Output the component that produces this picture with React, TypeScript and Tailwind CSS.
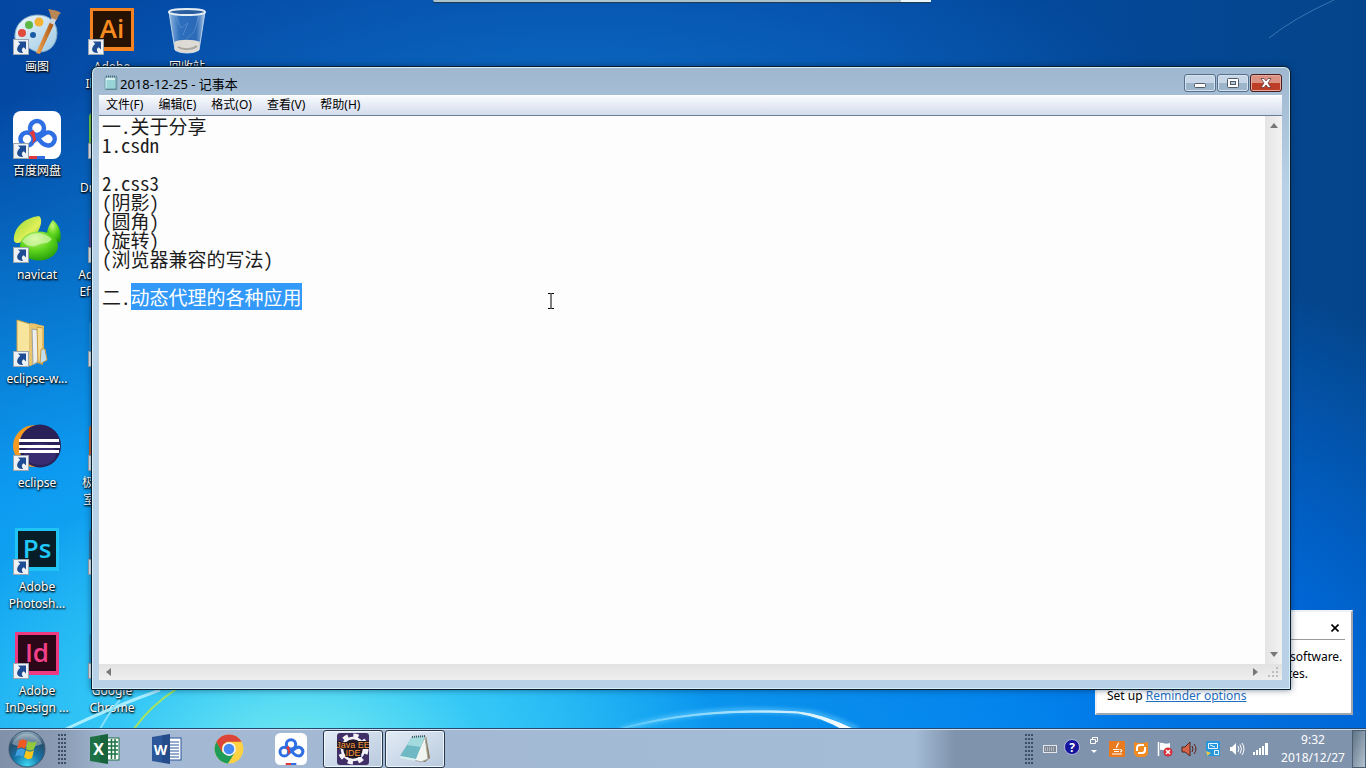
import { useEffect, useRef, type ReactNode } from "react";

const UI = "font-['Noto_Sans','Noto_Sans_CJK_SC',sans-serif]";

const NOTE = `一.关于分享
1.csdn

2.css3
(阴影)
(圆角)
(旋转)
(浏览器兼容的写法)

二.动态代理的各种应用`;

function Shortcut() {
  return (
    <svg className="absolute bottom-0 left-0 h-4 w-4" viewBox="0 0 16 16" aria-hidden="true">
      <rect x="0.5" y="0.5" width="15" height="15" fill="#eef2f6" stroke="#9aa5ad" />
      <path d="M5 2.500h8v8l-2.200-2.200C8.500 9.600 8.300 11 10 14C4 14.500 1.800 9.500 7.200 4.700Z" fill="#1d4c92" />
    </svg>
  );
}

function Paint() {
  return (
    <svg viewBox="0 0 48 48" className="h-full w-full" aria-hidden="true">
      <defs>
        <linearGradient id="palette" x1="0" y1="0" x2="1" y2="1">
          <stop offset="0" stopColor="#f2f9fd" />
          <stop offset="1" stopColor="#9cc9e4" />
        </linearGradient>
        <linearGradient id="handle" x1="0" x2="1">
          <stop offset="0" stopColor="#f3a653" />
          <stop offset="1" stopColor="#a8530f" />
        </linearGradient>
      </defs>
      <path d="M25 8C11 8 1 18 2 31c1 8 7 8 11 9 5 1 7 5 14 5 10 0 17-8 17-19C44 15 36 8 25 8Z" fill="url(#palette)" stroke="#83aac6" />
      <circle cx="20" cy="28" r="3" fill="#1a5da6" />
      <circle cx="9" cy="26" r="4" fill="#df4b3c" />
      <circle cx="16" cy="18" r="4" fill="#5db847" />
      <circle cx="26" cy="15" r="4.500" fill="#f3b233" />
      <path d="m37 15 4 2-14 30-4-1Z" fill="url(#handle)" />
      <path d="m37 16 2-7 5 2-3 7Z" fill="#cdd3d6" />
      <path d="M38 11c-1-5-2-8-3-9 5 1 9 1 13 4-2 1-3 3-4 7Z" fill="#b98756" />
    </svg>
  );
}

function AdobeTile({ letters, edge, fill, ink }: { letters: string; edge: string; fill: string; ink: string }) {
  return (
    <svg viewBox="0 0 48 48" className="h-full w-full" aria-hidden="true">
      <rect x="2" y="1" width="44" height="43" fill={edge} />
      <rect x="5" y="4" width="38" height="36" fill={fill} />
      <text x="24" y="31" textAnchor="middle" fontFamily="Open Sans" fontWeight="600" fontSize="26" fill={ink}>
        {letters}
      </text>
    </svg>
  );
}

function Bin() {
  return (
    <svg viewBox="0 0 48 48" className="h-full w-full" aria-hidden="true">
      <defs>
        <linearGradient id="bin" x1="0" x2="1">
          <stop offset="0" stopColor="#a9c9e8" stopOpacity=".9" />
          <stop offset=".3" stopColor="#3f7cc4" stopOpacity=".7" />
          <stop offset=".75" stopColor="#3a74bd" stopOpacity=".7" />
          <stop offset="1" stopColor="#c7dcf0" stopOpacity=".9" />
        </linearGradient>
      </defs>
      <path d="M6 5h36l-6 38c-5 4-19 4-24 0Z" fill="url(#bin)" stroke="#b9d2e8" />
      <path d="M11 35c5-3 20-3 26 0l-1 8c-5 4-19 4-24 0Z" fill="#dedbd5" />
      <path d="M15 40c5 3 14 3 19-1" stroke="#aaa6a0" strokeWidth="2" fill="none" />
      <path d="M12 8l6 13 7-5-5 12M36 9l-5 16-7 6" stroke="#8fb8e2" fill="none" opacity=".35" />
      <ellipse cx="24" cy="5" rx="18" ry="3" fill="#2b5e9e" stroke="#e4edf4" strokeWidth="2" />
    </svg>
  );
}

function BaiduCloud() {
  return (
    <svg viewBox="0 0 48 48" className="h-full w-full" aria-hidden="true">
      <rect width="48" height="48" rx="8" fill="#fff" />
      <g fill="none" stroke="#2f6fe4" strokeWidth="4.500">
        <circle cx="24" cy="17" r="7" />
        <circle cx="14" cy="28" r="6.500" />
        <path d="m19 31 12-8a6.500 6.500 0 1 1 2 11c-4-1-6-4-8-7" />
      </g>
      <path d="m16 22 5-3 2 10-4 4c2-4 1-8-3-11Z" fill="#e2393b" />
      <path d="M16 45h8v3h-8Z" fill="#e2393b" />
      <path d="M24 45h8v3h-8Z" fill="#2f6fe4" />
    </svg>
  );
}

function Navicat() {
  return (
    <svg viewBox="0 0 48 48" className="h-full w-full" aria-hidden="true">
      <defs>
        <radialGradient id="leaf" cx=".4" cy=".25" r=".8">
          <stop offset="0" stopColor="#c9f77b" />
          <stop offset=".5" stopColor="#5fd51d" />
          <stop offset="1" stopColor="#229a0a" />
        </radialGradient>
        <linearGradient id="ear" x1="0" y1="0" x2="1" y2="1">
          <stop offset="0" stopColor="#8edb2f" />
          <stop offset=".6" stopColor="#e2ef5b" />
          <stop offset="1" stopColor="#6fc822" />
        </linearGradient>
      </defs>
      <path d="M1 26C0 13 11 3 26 1c4 3 2 11-2 17-6 0-12 3-16 9-3 2-6 1-7-1Z" fill="url(#ear)" />
      <path d="M40 5c7 6 9 14 7 22-3 2-8-5-13-8 0-5 3-11 6-14Z" fill="url(#leaf)" />
      <ellipse cx="26" cy="31" rx="19" ry="14.500" fill="url(#leaf)" />
      <path d="M9 26c7-10 22-10 30-2-4 6-9 3-14 6-6 3-12 1-16-4Z" fill="#e6fbc4" opacity=".6" />
    </svg>
  );
}

function Folder() {
  return (
    <svg viewBox="0 0 48 48" className="h-full w-full" aria-hidden="true">
      <path d="M20 4 30 7v39l-10-4Z" fill="#d2a34a" />
      <path d="M4 1 17 5v42L4 40Z" fill="#f7e59d" stroke="#caa24c" />
      <path d="m17 4 14 3v34l-9 4-5 2Z" fill="#e9c46c" />
      <path d="m19 10 6 1v31l-5 4Z" fill="#eceeed" stroke="#9ca3a0" />
      <path d="m24 8 6 1v33l-5 2Z" fill="#f4dc93" stroke="#c99a3f" />
      <path d="M28 30h4l2 11-7 4Z" fill="#c2ddec" stroke="#c99a3f" />
    </svg>
  );
}

function Eclipse() {
  return (
    <svg viewBox="0 0 48 48" className="h-full w-full" aria-hidden="true">
      <ellipse cx="22" cy="23" rx="22" ry="21" fill="#f59a22" />
      <ellipse cx="27" cy="23" rx="21" ry="21.500" fill="#2a2158" />
      <ellipse cx="27" cy="31" rx="16" ry="11" fill="#473788" opacity=".5" />
      <path d="M6 16h40v3H6ZM6 22h41v3H6ZM6 27h40v3H6Z" fill="#fff" />
    </svg>
  );
}

function Sliver({ fill }: { fill: string }) {
  return (
    <svg viewBox="0 0 48 48" className="h-full w-full" aria-hidden="true">
      <rect x="1" y="2" width="44" height="42" rx="4" fill={fill} />
    </svg>
  );
}

function Chrome() {
  return (
    <svg viewBox="0 0 48 48" className="h-full w-full" aria-hidden="true">
      <circle cx="24" cy="24" r="23" fill="#ffd243" />
      <path d="M4 12.500A23 23 0 0 0 22.500 47L33.500 29 24 24l-9.500 6Z" fill="#1f9d58" />
      <path d="M4 12.500A23 23 0 0 1 44 12.500H24c-6 0-10 4-11 9v8Z" fill="#dc4437" />
      <circle cx="24" cy="24" r="11" fill="#f4f6f8" />
      <circle cx="24" cy="24" r="8.500" fill="#4688f1" />
    </svg>
  );
}

type Item = { name: string; icon: ReactNode; plain?: boolean };

const columns: Item[][] = [
  [
    { name: "画图", icon: <Paint /> },
    { name: "百度网盘", icon: <BaiduCloud /> },
    { name: "navicat", icon: <Navicat /> },
    { name: "eclipse-w...", icon: <Folder /> },
    { name: "eclipse", icon: <Eclipse /> },
    { name: "Adobe\nPhotosh...", icon: <AdobeTile letters="Ps" edge="#20c4f4" fill="#071e28" ink="#20c8fa" /> },
    { name: "Adobe\nInDesign ...", icon: <AdobeTile letters="Id" edge="#ee3a80" fill="#2c0718" ink="#f2418a" /> },
  ],
  [
    { name: "Adobe\nIllustrat...", icon: <AdobeTile letters="Ai" edge="#f58220" fill="#261203" ink="#f98a1f" /> },
    { name: "Adobe\nDreamwe...", icon: <Sliver fill="#7ad23a" /> },
    { name: "Adobe After\nEffects CC...", icon: <Sliver fill="#5a4a9c" /> },
    { name: "", icon: <Sliver fill="#2194dc" /> },
    { name: "极域电子教\n室学生端...", icon: <Sliver fill="#d8682e" /> },
    { name: "", icon: <Sliver fill="#3877a2" /> },
    { name: "Google\nChrome", icon: <Sliver fill="#2a9cd0" /> },
  ],
  [{ name: "回收站", icon: <Bin />, plain: true }],
];

function DesktopIcon({ item }: { item: Item }) {
  return (
    <a href="#" className="flex h-[104px] w-full flex-col items-center pt-[7px]">
      <span className="relative h-12 w-12 shrink-0">
        {item.icon}
        {!item.plain && <Shortcut />}
      </span>
      <span className="mt-[3px] text-center text-xs leading-[17px] whitespace-pre text-white [text-shadow:1px_1px_2px_#000,0_1px_2px_#000]">
        {item.name}
      </span>
    </a>
  );
}

function Wallpaper() {
  return (
    <>
      <svg className="absolute bottom-0 left-0 h-10 w-full" viewBox="0 0 1366 40" preserveAspectRatio="none" aria-hidden="true">
        <defs>
          <linearGradient id="arc" x1="0" x2="1">
            <stop offset="0" stopColor="#5cc8fb" />
            <stop offset=".5" stopColor="#a9e2ff" />
            <stop offset="1" stopColor="#fff" />
          </linearGradient>
          <filter id="glow" x="-10%" y="-50%" width="120%" height="200%">
            <feGaussianBlur stdDeviation="2" />
          </filter>
        </defs>
        <path d="M620 42C690 20 760 20 810 25Q835 30 858 42" fill="none" stroke="#6cd0ff" strokeWidth="5" opacity=".6" filter="url(#glow)" />
        <path d="M620 41C680 23 750 21 798 24Q822 26 855 42L844 42Q822 29 798 25C750 23 690 23 620 41Z" fill="url(#arc)" stroke="url(#arc)" />
        <path d="M66 41Q110 20 160 2" fill="none" stroke="#a7edff" strokeWidth="3" />
        <path d="M100 41Q112 20 120 12" fill="none" stroke="#82e0fb" strokeWidth="2" />
        <path d="M134 41Q150 18 178 0" fill="none" stroke="#a6e35e" strokeWidth="2" />
      </svg>
      <svg className="absolute top-0 right-0 h-10 w-28" viewBox="0 0 112 40" aria-hidden="true">
        <path d="M15 38Q40 18 80 0" fill="none" stroke="#4a8ac0" opacity=".7" />
      </svg>
    </>
  );
}

function NotepadIcon({ big = false }: { big?: boolean }) {
  return (
    <svg viewBox="0 0 32 32" className={big ? "h-8 w-8" : "h-4 w-4"} aria-hidden="true">
      {big ? (
        <>
          <path d="M27 3 31 25l-5 4-4-1Z" fill="#8b7a55" />
          <path d="m26 4 3 22-7 3-7-2Z" fill="#f2f4f2" stroke="#a7aaa2" />
          <path d="M13 4 26 3 17 26 1 23Z" fill="#6fb9c4" />
          <path d="M13 4 26 3l-4 11L8 12Z" fill="#a3dade" />
          <path d="M1 23 17 26l-1 2L1 25Z" fill="#d5eef0" />
          <path d="M13 4 26 3" stroke="#44575e" strokeWidth="2" strokeDasharray="1 1" />
        </>
      ) : (
        <>
          <path d="M4 4h24v25H4Z" fill="#d6f1f2" stroke="#719fac" strokeWidth="2" />
          <path d="M7 10h17v16H7Z" fill="#98d4d6" />
          <path d="M26 5v23H6" stroke="#3f7380" strokeWidth="2" fill="none" />
          <path d="M6 3h21" stroke="#476b78" strokeWidth="4" strokeDasharray="2 2" />
        </>
      )}
    </svg>
  );
}

const captionButton =
  "flex h-[18px] w-8 items-center justify-center rounded-[3px] border border-[#56718f] bg-linear-to-b from-[#c6d6e6] from-50% to-[#9db5cb] to-50% shadow-[inset_0_0_0_1px_#d6e3ef]";

function Notepad() {
  const editor = useRef<HTMLTextAreaElement>(null);
  useEffect(() => {
    const box = editor.current;
    if (!box) return;
    box.focus();
    box.setSelectionRange(NOTE.indexOf("动"), NOTE.length);
  }, []);
  return (
    <section
      aria-label="2018-12-25 - 记事本"
      className="absolute top-[66px] right-[75px] bottom-[38px] left-[91px] flex flex-col rounded-t-[7px] border border-[#0b1c2c] bg-[#b9cfe4] bg-linear-to-b from-[#9fb8cf] to-[#b9d1e7] to-[120px] pr-2 pb-[9px] pl-[7px] shadow-[inset_0_0_0_1px_#d4f1fb,0_0_6px_#00204088]"
    >
      <header className="flex h-7 shrink-0 items-center gap-px pt-1 pl-1">
        <NotepadIcon />
        <h1 className="flex-1 pt-px text-[13px] leading-[18px] text-black">2018-12-25 - 记事本</h1>
        <div className="flex gap-px">
          <button type="button" aria-label="最小化" className={captionButton}>
            <svg viewBox="0 0 12 6" className="mt-1 h-[6px] w-3" aria-hidden="true">
              <rect x=".5" y="1.500" width="11" height="4" rx="1" fill="#fff" stroke="#4d5968" />
            </svg>
          </button>
          <button type="button" aria-label="最大化" className={captionButton}>
            <svg viewBox="0 0 12 10" className="h-[10px] w-3" aria-hidden="true">
              <rect x=".5" y=".5" width="11" height="9" rx="1" fill="#fff" stroke="#4d5968" />
              <rect x="3.500" y="3.500" width="5" height="3" fill="#b5c7d8" stroke="#4d5968" />
            </svg>
          </button>
          <button
            type="button"
            aria-label="关闭"
            className="flex h-[18px] w-8 items-center justify-center rounded-[3px] border border-[#4a1a1c] bg-linear-to-b from-[#dc9282] from-50% to-[#bd3d27] to-50% shadow-[inset_0_0_0_1px_#e6ab9f]"
          >
            <svg viewBox="0 0 12 10" className="h-[10px] w-3" aria-hidden="true">
              <path d="M1 .5h3L6 3 8 .5h3L8 5l3 4.500H8L6 7 4 9.500H1L4 5Z" fill="#fff" stroke="#6a3a3c" strokeWidth=".8" />
            </svg>
          </button>
        </div>
      </header>
      <nav className="flex h-5 shrink-0 items-start gap-px border-t border-white bg-linear-to-b from-[#f8fafd] to-[#d3dbec]">
        {["文件(F)", "编辑(E)", "格式(O)", "查看(V)", "帮助(H)"].map((m) => (
          <button key={m} type="button" className="px-[7px] text-xs leading-[18px] text-black">
            {m}
          </button>
        ))}
      </nav>
      <div className="flex min-h-0 flex-1 flex-col border-t border-[#6b7f93]">
        <div className="flex min-h-0 flex-1">
          <textarea
            ref={editor}
            aria-label="文本"
            spellCheck={false}
            defaultValue={NOTE}
            className="min-w-0 flex-1 resize-none overflow-hidden bg-[#fdfdfd] pl-[3px] font-['Noto_Sans_Mono_CJK_SC','Noto_Sans_CJK_SC',monospace] text-[19px] leading-[19px] font-light text-[#1c1c1c] caret-transparent outline-none selection:bg-[#3399f8] selection:text-white"
          />
          <div className="flex w-[17px] flex-col items-center justify-between bg-linear-to-r from-[#e4e4e4] to-[#f2f2f2] py-[7px]">
            <svg viewBox="0 0 8 5" className="h-[5px] w-2" aria-hidden="true">
              <path d="m4 0 4 5H0Z" fill="#777" />
            </svg>
            <svg viewBox="0 0 8 5" className="h-[5px] w-2" aria-hidden="true">
              <path d="M0 0h8L4 5Z" fill="#777" />
            </svg>
          </div>
        </div>
        <div className="flex h-4 shrink-0 items-center bg-linear-to-b from-[#e2e2e2] to-[#efefef] pl-[7px]">
          <svg viewBox="0 0 5 8" className="h-2 w-[5px]" aria-hidden="true">
            <path d="M5 0v8L0 4Z" fill="#777" />
          </svg>
          <span className="flex-1" />
          <svg viewBox="0 0 5 8" className="h-2 w-[5px]" aria-hidden="true">
            <path d="m0 0 5 4-5 4Z" fill="#777" />
          </svg>
          <svg viewBox="0 0 12 12" className="mr-[3px] ml-[9px] h-3 w-3" aria-hidden="true">
            <path d="M9 1h2v2H9ZM5 5h2v2H5ZM9 5h2v2H9ZM1 9h2v2H1ZM5 9h2v2H5ZM9 9h2v2H9Z" fill="#bdbdbd" />
          </svg>
        </div>
      </div>
    </section>
  );
}

function Reminder() {
  return (
    <aside className="absolute right-[13px] bottom-[13px] flex h-[105px] w-[258px] flex-col border-2 border-t-[#eef2f6] border-r-[#a3a7ad] border-b-[#a3a7ad] border-l-[#eef2f6] bg-white px-[6px] text-xs leading-[17px] text-black">
      <div className="flex h-7 shrink-0 justify-end border-b border-[#9b9b9b] pt-2 pr-[6px]">
        <button type="button" aria-label="Close" className="h-4 w-2">
          <svg viewBox="0 0 8 8" className="h-2 w-2" aria-hidden="true">
            <path d="m.5.5 7 7m0-7-7 7" stroke="#000" strokeWidth="1.600" />
          </svg>
        </button>
      </div>
      <p className="mt-2 pl-[187px]">software.</p>
      <p className="pl-[185px]">tes.</p>
      <p className="mt-[5px] pl-1">
        Set up{" "}
        <a href="#" className="text-[#1f6fc0] underline">
          Reminder options
        </a>
      </p>
    </aside>
  );
}

function OfficeIcon({ letter, color, dark }: { letter: string; color: string; dark: string }) {
  return (
    <svg viewBox="0 0 32 32" className="h-8 w-8" aria-hidden="true">
      <rect x="17" y="5" width="13" height="22" fill="#fff" stroke={color} />
      {letter === "X" ? (
        <path d="M18 9h11M18 13h11M18 17h11M18 21h11M22.500 6v20M26 6v20" stroke={color} strokeWidth="1.500" />
      ) : (
        <path d="M19 9h9M19 12h9M19 15h9M19 18h9M19 21h9M19 24h9" stroke={color} strokeWidth="1" />
      )}
      <path d="M1 4 19 1v30L1 28Z" fill={color} />
      <path d="M11 2.300 19 1v30l-8-1.400Z" fill={dark} opacity=".35" />
      <text x="9.500" y="22" textAnchor="middle" fontFamily="Open Sans" fontWeight="700" fontSize={letter === "X" ? 16 : 14} fill="#fff">
        {letter}
      </text>
    </svg>
  );
}

function JavaEE() {
  return (
    <svg viewBox="0 0 32 32" className="h-8 w-8" aria-hidden="true">
      <rect width="32" height="32" rx="3" fill="#3f2f66" />
      <circle cx="16" cy="16" r="13" fill="none" stroke="#f4f2f8" strokeWidth="5" strokeDasharray="5 5.200" />
      <circle cx="16" cy="16" r="11" fill="#241b2c" stroke="#f4f2f8" strokeWidth="2.500" />
      <text x="16" y="15" textAnchor="middle" fontFamily="Liberation Sans" fontSize="9" fill="#ff9a3c" stroke="#1c1420" strokeWidth="2" paintOrder="stroke">
        Java EE
      </text>
      <text x="16" y="23" textAnchor="middle" fontFamily="Liberation Sans" fontSize="9" fill="#ff9a3c" stroke="#1c1420" strokeWidth="2" paintOrder="stroke">
        IDE
      </text>
    </svg>
  );
}

function Orb() {
  return (
    <svg viewBox="0 0 38 38" className="h-[38px] w-[38px]" aria-hidden="true">
      <defs>
        <radialGradient id="orb" cx=".5" cy=".95" r=".95">
          <stop offset="0" stopColor="#3ed8f2" />
          <stop offset=".4" stopColor="#1675a8" />
          <stop offset=".75" stopColor="#254d6c" />
          <stop offset="1" stopColor="#9cb4c4" />
        </radialGradient>
      </defs>
      <circle cx="19" cy="19" r="18" fill="url(#orb)" stroke="#3d5770" />
      <path d="M4 14a16 16 0 0 1 30 0c-9 4-21 4-30 0Z" fill="#fff" opacity=".35" />
      <path d="M11 11c3-2 5-2 8 0l-2 8c-3-2-5-2-8 0Z" fill="#ee5a22" />
      <path d="M20 11c3 2 6 2 9 0l-3 8c-2 2-5 2-8 0Z" fill="#93c93b" />
      <path d="M9 20c3-2 5-2 8 0l-2 7c-3-2-5-2-8 0Z" fill="#3f9fe0" />
      <path d="M18 20c3 2 5 2 8 0l-2 8c-3 2-6 1-8-1Z" fill="#fcc51c" />
    </svg>
  );
}

function Grip() {
  return (
    <svg viewBox="0 0 8 30" className="h-[30px] w-2 shrink-0" aria-hidden="true">
      {[0, 4, 8, 12, 16, 20, 24, 28].map((y) => (
        <path key={y} d={`M0 ${y}h2v2H0ZM3 ${y}h2v2H3ZM6 ${y}h2v2H6Z`} fill="#3c4f68" />
      ))}
    </svg>
  );
}

const tasks: { name: string; icon: ReactNode; open?: boolean }[] = [
  { name: "Excel", icon: <OfficeIcon letter="X" color="#1e7145" dark="#0b4a28" /> },
  { name: "Word", icon: <OfficeIcon letter="W" color="#2b579a" dark="#17376d" /> },
  { name: "Google Chrome", icon: <span className="h-[30px] w-[30px]"><Chrome /></span> },
  { name: "百度网盘", icon: <span className="h-8 w-8"><BaiduCloud /></span> },
  { name: "Java EE IDE", icon: <JavaEE />, open: true },
  { name: "记事本", icon: <NotepadIcon big />, open: true },
];

const small = "h-4 w-4";

function Tray() {
  return (
    <div className="flex items-center">
      <Grip />
      <div className="ml-[6px] flex items-center *:flex *:h-6 *:items-center *:justify-center">
        <button type="button" aria-label="键盘" className="w-[22px]">
          <svg viewBox="0 0 16 16" className={small} aria-hidden="true">
            <rect x="1.500" y="4.500" width="13" height="7" fill="#7f8894" stroke="#e3e6ea" />
            <path d="M3 7h10M3 9h10" stroke="#e3e6ea" strokeDasharray="1 1" />
          </svg>
        </button>
        <button type="button" aria-label="帮助" className="w-[22px] pb-1">
          <svg viewBox="0 0 16 16" className={small} aria-hidden="true">
            <circle cx="8" cy="8" r="7.500" fill="#14149c" stroke="#c6cbe6" strokeWidth=".8" />
            <text x="8" y="12.500" textAnchor="middle" fontFamily="Open Sans" fontWeight="700" fontSize="12" fill="#fff">?</text>
          </svg>
        </button>
        <button type="button" aria-label="显示隐藏的图标" className="w-[22px]">
          <svg viewBox="0 0 10 18" className="mb-2 h-[18px] w-[10px]" aria-hidden="true">
            <path d="M3.500 3.500v-2h5v4h-2M1.500 3.500h5v4h-5Z" fill="none" stroke="#fff" />
            <path d="M2 14h6l-3 3Z" fill="#fff" />
          </svg>
        </button>
        <button type="button" aria-label="Java" className="w-6">
          <svg viewBox="0 0 16 16" className={small} aria-hidden="true">
            <rect width="16" height="16" rx="1" fill="#ea7a1e" />
            <path d="M9 1.500c2 2-3 3-1 5.500M4 8.500h6.500M5 10.500h5M3 13h10M11 8.500c2.500 0 2 2.500 0 2.500" stroke="#fff" strokeWidth="1.200" fill="none" />
          </svg>
        </button>
        <button type="button" aria-label="同步" className="w-6">
          <svg viewBox="0 0 16 16" className={small} aria-hidden="true">
            <path d="M1 1 5 2h6l4-1v12l-3 3H4l-3-3Z" fill="#f28a22" />
            <path d="M4 10V7a3 3 0 0 1 3-3h4M12 6v3a3 3 0 0 1-3 3H5" stroke="#fff" strokeWidth="2" fill="none" />
          </svg>
        </button>
        <button type="button" aria-label="操作中心" className="w-6">
          <svg viewBox="0 0 16 16" className={small} aria-hidden="true">
            <path d="M1.500 1v14" stroke="#fff" strokeWidth="1.500" />
            <path d="M3 2c3-1 5 2 10 0v7c-4 2-7-1-10 0Z" fill="#fff" />
            <circle cx="11" cy="11" r="4.500" fill="#d3303a" />
            <path d="m9 9 4 4m0-4-4 4" stroke="#fff" strokeWidth="1.500" />
          </svg>
        </button>
        <button type="button" aria-label="音频管理" className="w-6">
          <svg viewBox="0 0 16 16" className={small} aria-hidden="true">
            <path d="M1 6h3l5-5v14L4 11H1Z" fill="#d86346" stroke="#4f2620" />
            <path d="M11 5q2 3 0 6M13 3q4 5 0 10" stroke="#5f1f18" fill="none" />
          </svg>
        </button>
        <button type="button" aria-label="显示设置" className="w-6">
          <svg viewBox="0 0 16 16" className={small} aria-hidden="true">
            <rect x="1" width="14" height="15" rx="1" fill="#2697dc" />
            <path d="M3.500 2.500h9v5h-9ZM5 4l5 2M9.500 9.500h4v4h-4Z" fill="none" stroke="#e8f5fd" />
            <path d="m1 10 5 2-4 3Z" fill="#f1c644" />
          </svg>
        </button>
        <button type="button" aria-label="音量" className="w-6">
          <svg viewBox="0 0 16 16" className={small} aria-hidden="true">
            <path d="M1 6h2l4-4v12l-4-4H1Z" fill="#fff" />
            <path d="M9 5q2 3 0 6M11 3.500q3 4.500 0 9M13 2q4 6 0 12" stroke="#fff" fill="none" />
          </svg>
        </button>
        <button type="button" aria-label="网络" className="w-6">
          <svg viewBox="0 0 16 16" className={small} aria-hidden="true">
            <path d="M0 11h2v3H0ZM3 9h2v5H3ZM6 7h2v7H6ZM9 5h2v9H9ZM12 2h3v12h-3Z" fill="#fff" />
          </svg>
        </button>
      </div>
      <button type="button" className="w-[79px] pl-px text-center text-xs leading-[18px] text-white">
        <time className="block">9:32</time>
        <time className="block">2018/12/27</time>
      </button>
      <button
        type="button"
        aria-label="显示桌面"
        className="h-[38px] w-[14px] border border-[#4b5d70] bg-linear-to-br from-[#5f7488] to-[#b5c3cf]"
      />
    </div>
  );
}

function Taskbar() {
  return (
    <footer className="flex h-10 shrink-0 items-center border-t border-[#24486e] bg-[#a4bcd6] bg-[linear-gradient(90deg,#7f90a8_0,#8a9bb3_60px,#a3b8d2_110px,#a4bcd6_915px,#7f93ac_955px,#7f93ac_100%)] shadow-[inset_0_1px_0_#cfdff0]">
      <button type="button" aria-label="开始" className="ml-2">
        <Orb />
      </button>
      <div className="ml-3">
        <Grip />
      </div>
      <nav className="ml-[9px] flex flex-1 gap-[2px]">
        {tasks.map((t) => (
          <button
            key={t.name}
            type="button"
            aria-label={t.name}
            className={
              t.open
                ? "flex h-[38px] w-[60px] items-center justify-center rounded-[3px] border border-[#27384c] bg-linear-to-br from-[#e2ebf5] to-[#b9cade] shadow-[inset_0_0_0_1px_#eef5fb]"
                : "flex h-[38px] w-[60px] items-center justify-center"
            }
          >
            {t.icon}
          </button>
        ))}
      </nav>
      <Tray />
    </footer>
  );
}

export default function App() {
  return (
    <div className={`flex h-screen flex-col overflow-hidden ${UI}`}>
      <main className="relative min-h-0 flex-1 overflow-hidden bg-[#0353b0] bg-[radial-gradient(ellipse_420px_300px_at_22%_106%,#7ff0f0_0%,#35c8f6_45%,transparent_100%),radial-gradient(ellipse_900px_650px_at_18%_100%,#22bdf4_0%,#0c9af0_45%,transparent_100%),radial-gradient(ellipse_600px_200px_at_42%_16%,#0d6cc4_0%,transparent_100%),radial-gradient(ellipse_750px_520px_at_72%_105%,#0080f0_0%,#0068d8_50%,transparent_100%),linear-gradient(90deg,#0347a2_0%,#034aa6_60%,#04458a_100%)]">
        <Wallpaper />
        <div className="flex">
          {columns.map((items, i) => (
            <div key={i} className="flex w-[75px] flex-col pr-px">
              {items.map((item, j) => (
                <DesktopIcon key={j} item={item} />
              ))}
            </div>
          ))}
        </div>
        <div className="absolute top-0 left-[433px] flex h-[2px] w-[498px] justify-end rounded-b bg-[#a9c4cf] shadow-[0_1px_1px_#23384a]">
          <span className="w-[30px] bg-[#e9f6fc]" />
        </div>
        <Reminder />
        <Notepad />
        <svg className="absolute top-[293px] left-[547px] h-4 w-2" viewBox="0 0 8 16" aria-hidden="true">
          <path d="M1 .5h2.500l.5.500.500-.5H7M4 1v14M1 15.500h2.500L4 15l.500.500H7" fill="none" stroke="#000" />
        </svg>
      </main>
      <Taskbar />
    </div>
  );
}
